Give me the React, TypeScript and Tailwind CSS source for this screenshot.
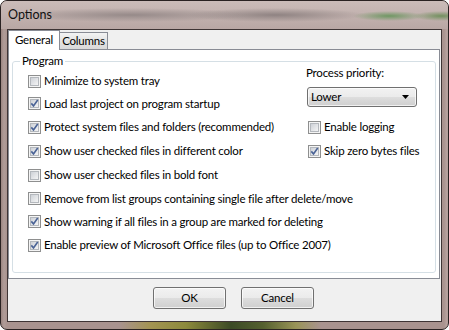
import React from "react";

function Check({ checked }: { checked: boolean }) {
  return (
    <svg width="13" height="13" viewBox="0 0 13 13" className="shrink-0">
      <defs>
        <linearGradient id="cbg" x1="0" y1="0" x2="1" y2="1">
          <stop offset="0" stopColor="#cbcfd5" />
          <stop offset="1" stopColor="#f7f7f7" />
        </linearGradient>
      </defs>
      <rect x="0.5" y="0.5" width="12" height="12" fill="#f4f4f4" stroke="#8e8f8f" />
      <rect x="2.5" y="2.5" width="8" height="8" fill="url(#cbg)" stroke="#b4b8bd" />
      {checked && (
        <path d="M3.3 6.4 L5.5 8.9 L9.7 3" fill="none" stroke="#4a6396" strokeWidth="1.6" strokeLinejoin="miter" />
      )}
    </svg>
  );
}

function Row({ label, checked, h }: { label: string; checked: boolean; h: string }) {
  return (
    <div className={`flex items-center gap-[3px] ${h}`}>
      <Check checked={checked} />
      <span className="whitespace-nowrap">{label}</span>
    </div>
  );
}

const btn =
  "w-[73px] h-[22px] rounded-[3px] border border-[#707070] bg-[linear-gradient(180deg,#f2f2f2,#ebebeb_48%,#dddddd_52%,#cfcfcf)] shadow-[inset_0_0_0_1px_rgba(255,255,255,0.7)]";

export default function App() {
  return (
    <div
      className="w-[449px] h-[330px] flex flex-col border border-[#2a2222] rounded-[7px] overflow-hidden text-[11.5px] tracking-[-0.2px] leading-[14px] text-black bg-[linear-gradient(90deg,#9b8581_0px,#b09c98_3px,#a9938f_6px,#a9938f_443px,#b8a4a0_446px,#9b8581_449px)]"
      style={{ fontFamily: 'Lato, "Liberation Sans", sans-serif' }}
    >
      {/* title bar */}
      <div className="h-[28px] shrink-0 flex items-center pl-[7px] bg-[radial-gradient(36px_5px_at_388px_15px,#6f9763,transparent),radial-gradient(28px_5px_at_440px_15px,#72905f,transparent),radial-gradient(120px_7px_at_130px_14px,#968a89,transparent),radial-gradient(90px_7px_at_275px_14px,#8f8382,transparent),linear-gradient(180deg,#cbbcb9,#b9a7a4)]">
        <span className="text-[12.5px] tracking-normal text-[#111]">Options</span>
      </div>

      {/* client area */}
      <div className="mx-[6px] h-[293px] shrink-0 border border-[#3e3434] bg-[#f0f0f0] flex flex-col">
        {/* tabs */}
        <div className="flex h-[19px] items-start">
          <div className="relative z-10 h-[20px] w-[52px] border border-b-0 border-[#898c95] bg-white flex items-center justify-center pb-[1px]">
            General
          </div>
          <div className="mt-[2px] h-[17px] w-[49px] -ml-[1px] border border-b-0 border-[#898c95] bg-[linear-gradient(180deg,#f3f3f3,#e3e3e3_50%,#d9d9d9)] flex items-center justify-center">
            Columns
          </div>
        </div>

        {/* panel */}
        <div className="h-[230px] mr-[1px] border border-[#898c95] bg-white pt-[6px] px-[3px]">
          <fieldset className="h-[217px] border border-[#d5dfe5] rounded-[3px] p-0 m-0">
            <legend className="ml-[7px] px-[2px] leading-[10px] h-[10px]">Program</legend>
            <div className="flex">
              <div className="w-[293px] pl-[15px] pt-[4px] flex flex-col">
                <Row label="Minimize to system tray" checked={false} h="h-[22px]" />
                <Row label="Load last project on program startup" checked h="h-[23px]" />
                <Row label="Protect system files and folders (recommended)" checked h="h-[24px]" />
                <Row label="Show user checked files in different color" checked h="h-[24px]" />
              </div>
              <div className="flex flex-col">
                <div className="h-[14px] leading-[14px]">Process priority:</div>
                <div className="ml-[1px] mt-[7px] w-[110px] h-[20px] rounded-[3px] border border-[#707070] bg-[linear-gradient(180deg,#f2f2f2,#ebebeb_48%,#dddddd_52%,#cfcfcf)] shadow-[inset_0_0_0_1px_rgba(255,255,255,0.7)] flex items-center pl-[3px] pr-[7px]">
                  <span className="flex-1">Lower</span>
                  <svg width="7" height="4" viewBox="0 0 7 4">
                    <path d="M0 0 H7 L3.5 4 Z" fill="#000" />
                  </svg>
                </div>
                <div className="mt-[8px] pl-[2px]">
                  <Row label="Enable logging" checked={false} h="h-[24px]" />
                  <Row label="Skip zero bytes files" checked h="h-[24px]" />
                </div>
              </div>
            </div>
            <div className="pl-[15px] flex flex-col">
              <Row label="Show user checked files in bold font" checked={false} h="h-[24px]" />
              <Row label="Remove from list groups containing single file after delete/move" checked={false} h="h-[23px]" />
              <Row label="Show warning if all files in a group are marked for deleting" checked h="h-[23px]" />
              <Row label="Enable preview of Microsoft Office files (up to Office 2007)" checked h="h-[24px]" />
            </div>
          </fieldset>
        </div>

        {/* buttons */}
        <div className="flex gap-[15px] pl-[145px] mt-[8px]">
          <button className={btn}>OK</button>
          <button className={btn}>Cancel</button>
        </div>
      </div>

      {/* bottom frame */}
      <div className="flex-1 bg-[linear-gradient(90deg,transparent_0px,transparent_118px,#a39452_150px,#8d8a3c_185px,#3c4a26_230px,#55602f_262px,#9a9458_295px,transparent_320px)]" />
    </div>
  );
}
